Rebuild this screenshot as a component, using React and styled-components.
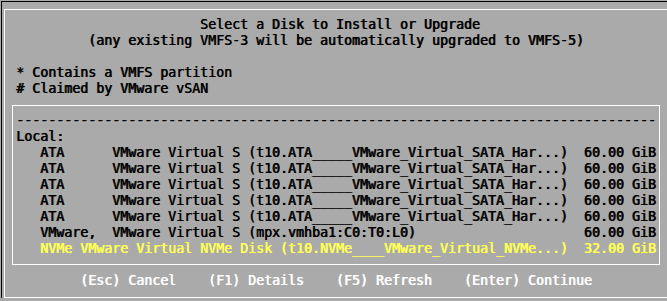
import React from "react";
import styled, { createGlobalStyle } from "styled-components";

const GlobalStyle = createGlobalStyle`
  html, body {
    margin: 0;
    padding: 0;
    background: #aaaaaa;
  }
`;

const Screen = styled.div`
  width: 667px;
  height: 301px;
  box-sizing: border-box;
  padding: 1px 0 0 1px;
  background: #aaaaaa;
  overflow: hidden;
  font-family: "DejaVu Sans Mono", "Liberation Mono", monospace;
  font-size: 13.29px;
  /* console font: vertical strokes doubled, horizontals thin */
  text-shadow: 0.7px 0 0 currentColor;
`;

const BlackFrame = styled.div`
  border-top: 1px solid #000;
  border-left: 1px solid #000;
  padding: 7px 0 0 2px;
`;

const WhiteFrame = styled.div`
  width: 700px;
  height: 289px;
  box-sizing: border-box;
  border: 1px solid #ffffff;
  border-right: none;
  padding: 6px 0 0 7px;
`;

const Block = styled.div`
  padding-left: 4px;
`;

// one text row of the 8x16 console grid
const Line = styled.div`
  height: 16px;
  line-height: 18px;
  white-space: pre;
  color: ${({ $tone }) =>
    $tone === "yellow" ? "#ffff55" : $tone === "white" ? "#ffffff" : "#000000"};
`;

const DiskBox = styled.div`
  width: 648px;
  box-sizing: border-box;
  margin-top: 9px;
  border: 1px solid #ffffff;
  padding: 6px 3px 8px 3px;
`;

const Footer = styled.div`
  margin-top: 7px;
  padding-left: 4px;
`;

const header = [
  "                       Select a Disk to Install or Upgrade",
  "         (any existing VMFS-3 will be automatically upgraded to VMFS-5)",
  "",
  "* Contains a VMFS partition",
  "# Claimed by VMware vSAN",
];

const ata =
  "   ATA      VMware Virtual S (t10.ATA_____VMware_Virtual_SATA_Har...)  60.00 GiB";

const disks = [
  { text: "-".repeat(80) },
  { text: "Local:" },
  { text: ata },
  { text: ata },
  { text: ata },
  { text: ata },
  { text: ata },
  {
    text: "   VMware,  VMware Virtual S (mpx.vmhba1:C0:T0:L0)                     60.00 GiB",
  },
  {
    text: "   NVMe VMware Virtual NVMe Disk (t10.NVMe____VMware_Virtual_NVMe...)  32.00 GiB",
    tone: "yellow",
  },
];

export default function App() {
  return (
    <>
      <GlobalStyle />
      <Screen>
        <BlackFrame>
          <WhiteFrame>
            <Block>
              {header.map((l, i) => (
                <Line key={i}>{l}</Line>
              ))}
            </Block>
            <DiskBox>
              {disks.map((d, i) => (
                <Line key={i} $tone={d.tone}>
                  {d.text}
                </Line>
              ))}
            </DiskBox>
            <Footer>
              <Line $tone="white">
                {"        (Esc) Cancel    (F1) Details    (F5) Refresh    (Enter) Continue"}
              </Line>
            </Footer>
          </WhiteFrame>
        </BlackFrame>
      </Screen>
    </>
  );
}
